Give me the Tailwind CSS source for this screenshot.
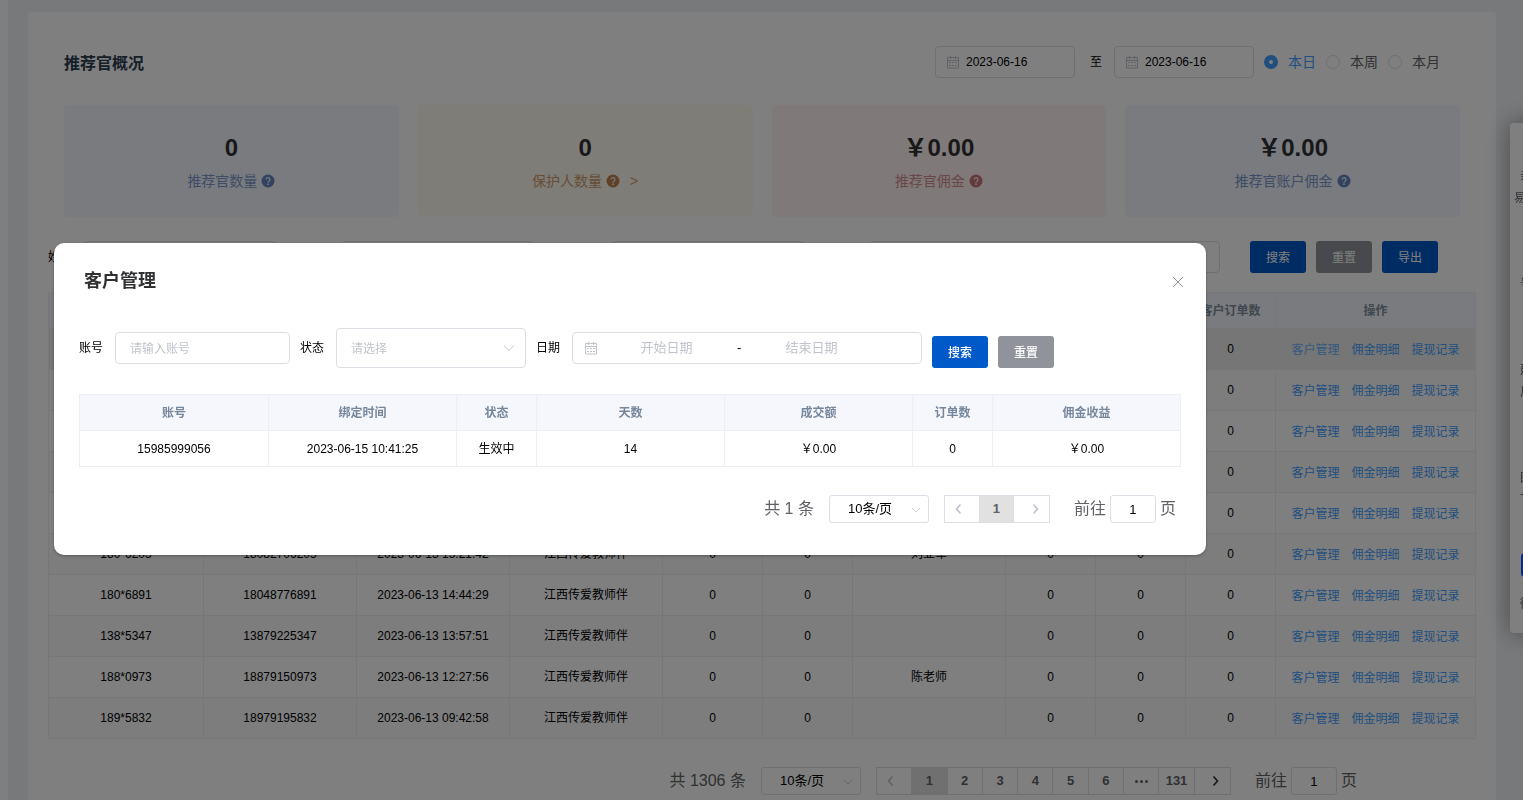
<!DOCTYPE html>
<html lang="zh-CN">
<head>
<meta charset="utf-8">
<title>推荐官概况</title>
<script src="https://cdn.jsdelivr.net/npm/@tailwindcss/browser@4"></script>
</head>
<body class="h-screen overflow-hidden bg-white font-['Liberation_Sans','Noto_Sans_CJK_SC',sans-serif] text-xs text-black">

<svg class="hidden" aria-hidden="true">
  <symbol id="calendar" viewBox="0 0 14 14" fill="none" stroke="currentColor">
    <path d="M1.500 2.500h11v10.500h-11zM1.500 5.500h11M4.500 1v3M9.500 1v3"/>
    <path stroke-dasharray="2 1" d="M3 7.500h8M3 10.500h8"/>
  </symbol>
  <symbol id="question" viewBox="0 0 14 14">
    <circle cx="7" cy="7" r="6.500" fill="currentColor"/>
    <path d="M5.100 5.600a1.900 1.900 0 1 1 2.900 1.600c-.7.400-1 .7-1 1.300" fill="none" stroke="#f2f4f8" stroke-width="1.300"/>
    <circle cx="7" cy="10.200" r=".9" fill="#f2f4f8"/>
  </symbol>
  <symbol id="down" viewBox="0 0 12 12" fill="none" stroke="currentColor"><path d="M1 3.500l5 5 5-5"/></symbol>
  <symbol id="left" viewBox="0 0 12 12" fill="none" stroke="currentColor" stroke-width="1.700"><path d="M7.500 1.500L3.500 6l4 4.500"/></symbol>
  <symbol id="right" viewBox="0 0 12 12" fill="none" stroke="currentColor" stroke-width="1.700"><path d="M4.500 1.500l4 4.500-4 4.500"/></symbol>
</svg>

<main class="ml-2 h-full bg-[#f0f2f5] pt-3 pr-[27px] pl-5">
  <div class="h-full rounded-t bg-white pt-[34px]">
    <header class="flex h-8 items-center pr-14 pl-9">
      <h1 class="mr-auto pt-1 text-base font-bold text-[#2c3e50]">推荐官概况</h1>
      <label class="flex h-8 w-[140px] items-center gap-1.5 rounded border border-[#dcdfe6] pl-2.5 text-[#c0c4cc]">
        <svg class="size-3.5 shrink-0"><use href="#calendar"/></svg>
        <input class="w-full min-w-0 text-black outline-none" aria-label="开始日期" value="2023-06-16">
      </label>
      <span class="mr-3 ml-[15px]">至</span>
      <label class="flex h-8 w-[140px] items-center gap-1.5 rounded border border-[#dcdfe6] pl-2.5 text-[#c0c4cc]">
        <svg class="size-3.5 shrink-0"><use href="#calendar"/></svg>
        <input class="w-full min-w-0 text-black outline-none" aria-label="结束日期" value="2023-06-16">
      </label>
      <div class="ml-2.5 flex gap-2.5 text-sm text-[#606266]">
        <label class="flex items-center gap-2.5 text-[#409eff]"><input type="radio" name="period" checked class="size-3.5 appearance-none rounded-full border border-[#dcdfe6] bg-white checked:border-5 checked:border-[#409eff]">本日</label>
        <label class="flex items-center gap-2.5"><input type="radio" name="period" class="size-3.5 appearance-none rounded-full border border-[#dcdfe6] bg-white">本周</label>
        <label class="flex items-center gap-2.5"><input type="radio" name="period" class="size-3.5 appearance-none rounded-full border border-[#dcdfe6] bg-white">本月</label>
      </div>
    </header>

    <section class="mt-[27px] grid grid-cols-4 gap-[19px] px-9">
      <div class="flex h-28 flex-col items-center rounded bg-[#f2f6ff] pt-[27px]">
        <p class="text-2xl leading-8 font-bold text-[#303133]">0</p>
        <p class="mt-[7px] flex items-center gap-1 text-sm text-[#7c9bcb]">推荐官数量<svg class="size-3.5 text-[#6286bd]"><use href="#question"/></svg></p>
      </div>
      <div class="flex h-28 flex-col items-center rounded bg-[#fdfaf0] pt-[27px]">
        <p class="text-2xl leading-8 font-bold text-[#303133]">0</p>
        <p class="mt-[7px] flex items-center gap-1 text-sm text-[#cf9a6b]">保护人数量<svg class="size-3.5 text-[#c08350]"><use href="#question"/></svg><span class="ml-1.5">&gt;</span></p>
      </div>
      <div class="flex h-28 flex-col items-center rounded bg-[#fff2f2] pt-[27px]">
        <p class="text-2xl leading-8 font-bold text-[#303133]">￥0.00</p>
        <p class="mt-[7px] flex items-center gap-1 text-sm text-[#d68d91]">推荐官佣金<svg class="size-3.5 text-[#c8747a]"><use href="#question"/></svg></p>
      </div>
      <div class="flex h-28 flex-col items-center rounded bg-[#f2f6ff] pt-[27px]">
        <p class="text-2xl leading-8 font-bold text-[#303133]">￥0.00</p>
        <p class="mt-[7px] flex items-center gap-1 text-sm text-[#7c9bcb]">推荐官账户佣金<svg class="size-3.5 text-[#6286bd]"><use href="#question"/></svg></p>
      </div>
    </section>

    <form class="mt-6 flex items-center px-5">
      <label class="shrink-0" for="name">姓名</label>
      <input id="name" class="ml-3 h-8 w-48 rounded border border-[#dcdfe6]">
      <input aria-label="手机号" class="ml-[66px] h-8 w-48 rounded border border-[#dcdfe6]">
      <input aria-label="推荐人" class="ml-[78px] h-8 w-48 rounded border border-[#dcdfe6]">
      <input aria-label="日期" class="ml-[66px] h-8 w-[350px] rounded border border-[#dcdfe6]">
      <button type="button" class="ml-[30px] h-8 w-14 rounded-[3px] bg-[#0059c9] pt-0.5 text-white">搜索</button>
      <button type="button" class="ml-2.5 h-8 w-14 rounded-[3px] bg-[#909399] pt-0.5 text-white">重置</button>
      <button type="button" class="ml-2.5 h-8 w-14 rounded-[3px] bg-[#0059c9] pt-0.5 text-white">导出</button>
    </form>

    <div class="mt-[19px] px-5">
      <table class="w-full table-fixed border-collapse text-center [&_td]:border [&_td]:border-[#ebeef5] [&_th]:border [&_th]:border-[#ebeef5]">
        <colgroup>
          <col class="w-[155px]"><col class="w-[153px]"><col class="w-[153px]"><col class="w-[153px]"><col class="w-[100px]"><col class="w-[90px]"><col class="w-[153px]"><col class="w-[90px]"><col class="w-[90px]"><col class="w-[90px]"><col>
        </colgroup>
        <thead>
          <tr class="h-9 bg-[#f5f7fc] whitespace-nowrap text-[#808c9c]">
            <th></th><th></th><th></th><th></th><th></th><th></th><th></th><th></th><th></th><th>客户订单数</th><th>操作</th>
          </tr>
        </thead>
        <tbody id="rows"></tbody>
      </table>
    </div>

    <nav class="mt-7 flex items-center justify-end pr-[139px] text-base text-[#606266]" aria-label="分页">
      <span>共 1306 条</span>
      <div class="relative ml-[15px] h-7 w-[100px] text-[13px] text-[#c0c4cc]">
        <select aria-label="每页条数" class="h-7 w-full appearance-none rounded-[3px] border border-[#dcdfe6] pl-[18px] text-black"><option>10条/页</option></select>
        <svg class="absolute top-2.5 right-2 size-2.5"><use href="#down"/></svg>
      </div>
      <div class="ml-[15px] grid h-7 w-[355px] grid-cols-10 divide-x divide-[#dcdfe6] border border-[#dcdfe6] text-[13px] font-bold">
        <button class="flex items-center justify-center pr-1.5 text-[#c0c4cc]" aria-label="上一页"><svg class="size-3"><use href="#left"/></svg></button>
        <button class="bg-[#e1e1e1]">1</button><button>2</button><button>3</button><button>4</button><button>5</button><button>6</button>
        <button class="flex items-center justify-center gap-0.5" aria-label="更多"><i class="size-[3px] rounded-full bg-[#606266]"></i><i class="size-[3px] rounded-full bg-[#606266]"></i><i class="size-[3px] rounded-full bg-[#606266]"></i></button>
        <button>131</button>
        <button class="flex items-center justify-center pl-1.5 text-[#303133]" aria-label="下一页"><svg class="size-3"><use href="#right"/></svg></button>
      </div>
      <label class="ml-6 flex items-center gap-1">前往<input class="h-7 w-[46px] rounded-[3px] border border-[#dcdfe6] text-center text-[13px] text-black" value="1">页</label>
    </nav>
  </div>
</main>

<!-- Help panel docked at the window's right edge, mostly off screen -->
<aside class="fixed top-[123px] -right-[187px] h-[510px] w-[200px] rounded-sm bg-white pt-[42px] pl-1 text-xs leading-[22px] text-[#606266] shadow-[0_0_24px_rgba(0,0,0,0.4)]">
  <p class="pl-1.5">亲爱的用户</p>
  <p>易懂的说明</p>
  <p class="mt-[64px] pl-1.5">号码</p>
  <p class="mt-[64px] pl-1.5">建议</p>
  <p class="pl-1.5">反馈</p>
  <p class="mt-[64px] pl-1.5">图片</p>
  <p class="pl-1.5">下载</p>
  <button class="mt-[42px] ml-[7px] h-6 w-32 rounded bg-[#1456f0] text-white">咨询</button>
  <p class="mt-4 pl-1.5">微信</p>
</aside>

<div class="fixed inset-0 bg-black/50 pt-[243px] pl-[54px]">
  <section role="dialog" aria-labelledby="dialog-title" class="w-full max-w-6xl rounded-[10px] bg-white pt-[23px] pb-8 shadow-[0_1px_3px_rgba(0,0,0,0.3)]">
    <header class="flex h-7 items-center justify-between pr-[22px] pl-[30px]">
      <h2 id="dialog-title" class="pt-0.5 text-lg font-bold text-[#303133]">客户管理</h2>
      <button aria-label="关闭" class="pt-1 text-[#909399]"><svg class="size-3" viewBox="0 0 12 12" fill="none" stroke="currentColor"><path d="M1 1l10 10M11 1L1 11"/></svg></button>
    </header>

    <form class="mt-[34px] flex h-10 items-center px-[25px]">
      <label for="account">账号</label>
      <input id="account" placeholder="请输入账号" class="ml-3 h-8 w-[175px] rounded border border-[#dcdfe6] px-3.5 pt-0.5 placeholder:text-[#c0c4cc]">
      <label for="status" class="ml-2.5">状态</label>
      <div class="relative ml-3 w-[190px] text-[#c0c4cc]">
        <select id="status" class="h-10 w-full appearance-none rounded border border-[#dcdfe6] px-3.5 pt-0.5"><option>请选择</option></select>
        <svg class="absolute top-3.5 right-[11px] size-3"><use href="#down"/></svg>
      </div>
      <label for="start" class="ml-2.5">日期</label>
      <div class="ml-3 flex h-8 w-[350px] items-center rounded border border-[#dcdfe6] pl-[11px] text-[13px] text-[#c0c4cc]">
        <svg class="size-3.5 shrink-0"><use href="#calendar"/></svg>
        <input id="start" placeholder="开始日期" class="w-[137px] text-center placeholder:text-[#c0c4cc]">
        <span class="w-2 text-center text-black">-</span>
        <input aria-label="结束日期" placeholder="结束日期" class="w-[137px] text-center placeholder:text-[#c0c4cc]">
      </div>
      <button type="button" class="ml-2.5 h-8 w-14 self-end rounded-[3px] bg-[#0059c9] pt-0.5 font-medium text-white">搜索</button>
      <button type="button" class="ml-2.5 h-8 w-14 self-end rounded-[3px] bg-[#909399] pt-0.5 font-medium text-white">重置</button>
    </form>

    <div class="mt-[26px] px-[25px]">
      <table class="w-full table-fixed border-collapse text-center [&_td]:border [&_td]:border-[#ebeef5] [&_th]:border [&_th]:border-[#ebeef5]">
        <colgroup><col class="w-[189px]"><col class="w-[188px]"><col class="w-20"><col class="w-[188px]"><col class="w-[188px]"><col class="w-20"><col></colgroup>
        <thead>
          <tr class="h-9 bg-[#f5f7fc] text-[#76879c]"><th>账号</th><th>绑定时间</th><th>状态</th><th>天数</th><th>成交额</th><th>订单数</th><th>佣金收益</th></tr>
        </thead>
        <tbody>
          <tr class="h-9"><td>15985999056</td><td>2023-06-15 10:41:25</td><td>生效中</td><td>14</td><td>￥0.00</td><td>0</td><td>￥0.00</td></tr>
        </tbody>
      </table>
    </div>

    <nav class="mt-7 flex items-center justify-end pr-[30px] text-base text-[#606266]" aria-label="客户分页">
      <span>共 1 条</span>
      <div class="relative ml-[15px] h-7 w-[100px] text-[13px] text-[#c0c4cc]">
        <select aria-label="每页条数" class="h-7 w-full appearance-none rounded-[3px] border border-[#dcdfe6] pl-[18px] text-black"><option>10条/页</option></select>
        <svg class="absolute top-2.5 right-2 size-2.5"><use href="#down"/></svg>
      </div>
      <div class="ml-[15px] grid h-7 w-[106px] grid-cols-3 divide-x divide-[#dcdfe6] border border-[#dcdfe6] text-[13px] font-bold">
        <button class="flex items-center justify-center pr-1.5 text-[#c0c4cc]" aria-label="上一页"><svg class="size-3"><use href="#left"/></svg></button>
        <button class="bg-[#e1e1e1]">1</button>
        <button class="flex items-center justify-center pl-1.5 text-[#c0c4cc]" aria-label="下一页"><svg class="size-3"><use href="#right"/></svg></button>
      </div>
      <label class="ml-6 flex items-center gap-1">前往<input class="h-7 w-[46px] rounded-[3px] border border-[#dcdfe6] text-center text-[13px] text-black" value="1">页</label>
    </nav>
  </section>
</div>

<script>
  const org = '江西传爱教师伴';
  const data = [
    [], [], [], [], [],
    ['180*6205', '18082706205', '2023-06-13 15:21:42', '刘亚军'],
    ['180*6891', '18048776891', '2023-06-13 14:44:29', ''],
    ['138*5347', '13879225347', '2023-06-13 13:57:51', ''],
    ['188*0973', '18879150973', '2023-06-13 12:27:56', '陈老师'],
    ['189*5832', '18979195832', '2023-06-13 09:42:58', ''],
  ];
  document.getElementById('rows').innerHTML = data.map(([name = '', phone = '', time = '', ref = ''], i) => {
    const bg = i === 0 ? 'h-[41px] bg-[#ededed]' : i % 2 ? 'h-[41px] bg-[#fafafa]' : 'h-[41px] bg-white';
    const first = i === 0 ? 'text-[#66b1ff]' : 'text-[#409eff]';
    return `<tr class="${bg}"><td>${name}</td><td>${phone}</td><td>${time}</td><td>${name ? org : ''}</td><td>0</td><td>0</td><td>${ref}</td><td>0</td><td>0</td><td>0</td>
      <td><div class="flex justify-center gap-3 pt-0.5 whitespace-nowrap text-[#409eff]"><a href="#" class="${first}">客户管理</a><a href="#">佣金明细</a><a href="#">提现记录</a></div></td></tr>`;
  }).join('');
</script>
</body>
</html>
